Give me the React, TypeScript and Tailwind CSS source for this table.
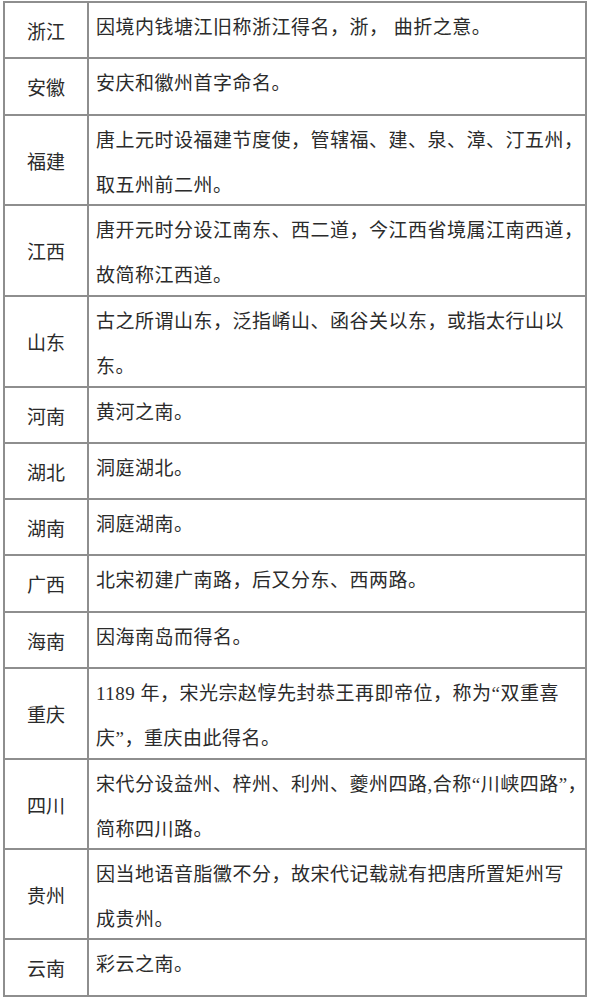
import React from "react";

type Row = { name: string; lines: string[]; h: number };

const rows: Row[] = [
  { name: "浙江", lines: ["因境内钱塘江旧称浙江得名，浙， 曲折之意。"], h: 56 },
  { name: "安徽", lines: ["安庆和徽州首字命名。"], h: 57 },
  { name: "福建", lines: ["唐上元时设福建节度使，管辖福、建、泉、漳、汀五州，", "取五州前二州。"], h: 90 },
  { name: "江西", lines: ["唐开元时分设江南东、西二道，今江西省境属江南西道，", "故简称江西道。"], h: 91 },
  { name: "山东", lines: ["古之所谓山东，泛指崤山、函谷关以东，或指太行山以", "东。"], h: 91 },
  { name: "河南", lines: ["黄河之南。"], h: 56 },
  { name: "湖北", lines: ["洞庭湖北。"], h: 56 },
  { name: "湖南", lines: ["洞庭湖南。"], h: 56 },
  { name: "广西", lines: ["北宋初建广南路，后又分东、西两路。"], h: 57 },
  { name: "海南", lines: ["因海南岛而得名。"], h: 56 },
  { name: "重庆", lines: ["1189 年，宋光宗赵惇先封恭王再即帝位，称为“双重喜", "庆”，重庆由此得名。"], h: 91 },
  { name: "四川", lines: ["宋代分设益州、梓州、利州、夔州四路,合称“川峡四路”，", "简称四川路。"], h: 90 },
  { name: "贵州", lines: ["因当地语音脂黴不分，故宋代记载就有把唐所置矩州写", "成贵州。"], h: 90 },
  { name: "云南", lines: ["彩云之南。"], h: 55 },
];

export default function App() {
  return (
    <div
      className="w-[589px] h-[1000px] bg-white overflow-hidden text-[#2b2b2b]"
      style={{ fontFamily: '"Liberation Serif", "Noto Sans CJK SC", serif' }}
    >
      <div className="ml-[3px] mt-[1px] w-[584px] border-2 border-[#8e8e8e] flex flex-col">
        {rows.map((r, i) => (
          <div
            key={r.name}
            className={
              "flex " + (i < rows.length - 1 ? "border-b-2 border-[#8e8e8e]" : "")
            }
            style={{ height: r.h }}
          >
            <div className="w-[84px] shrink-0 border-r-2 border-[#8e8e8e] flex items-center justify-center text-[19px] pt-[6px]">
              {r.name}
            </div>
            <div className="flex-1 pl-[7px] pt-[2px] text-[19px] leading-[45px] tracking-[0.5px]">
              {r.lines.map((l, j) => (
                <div key={j} className="whitespace-pre">
                  {l}
                </div>
              ))}
            </div>
          </div>
        ))}
      </div>
    </div>
  );
}
